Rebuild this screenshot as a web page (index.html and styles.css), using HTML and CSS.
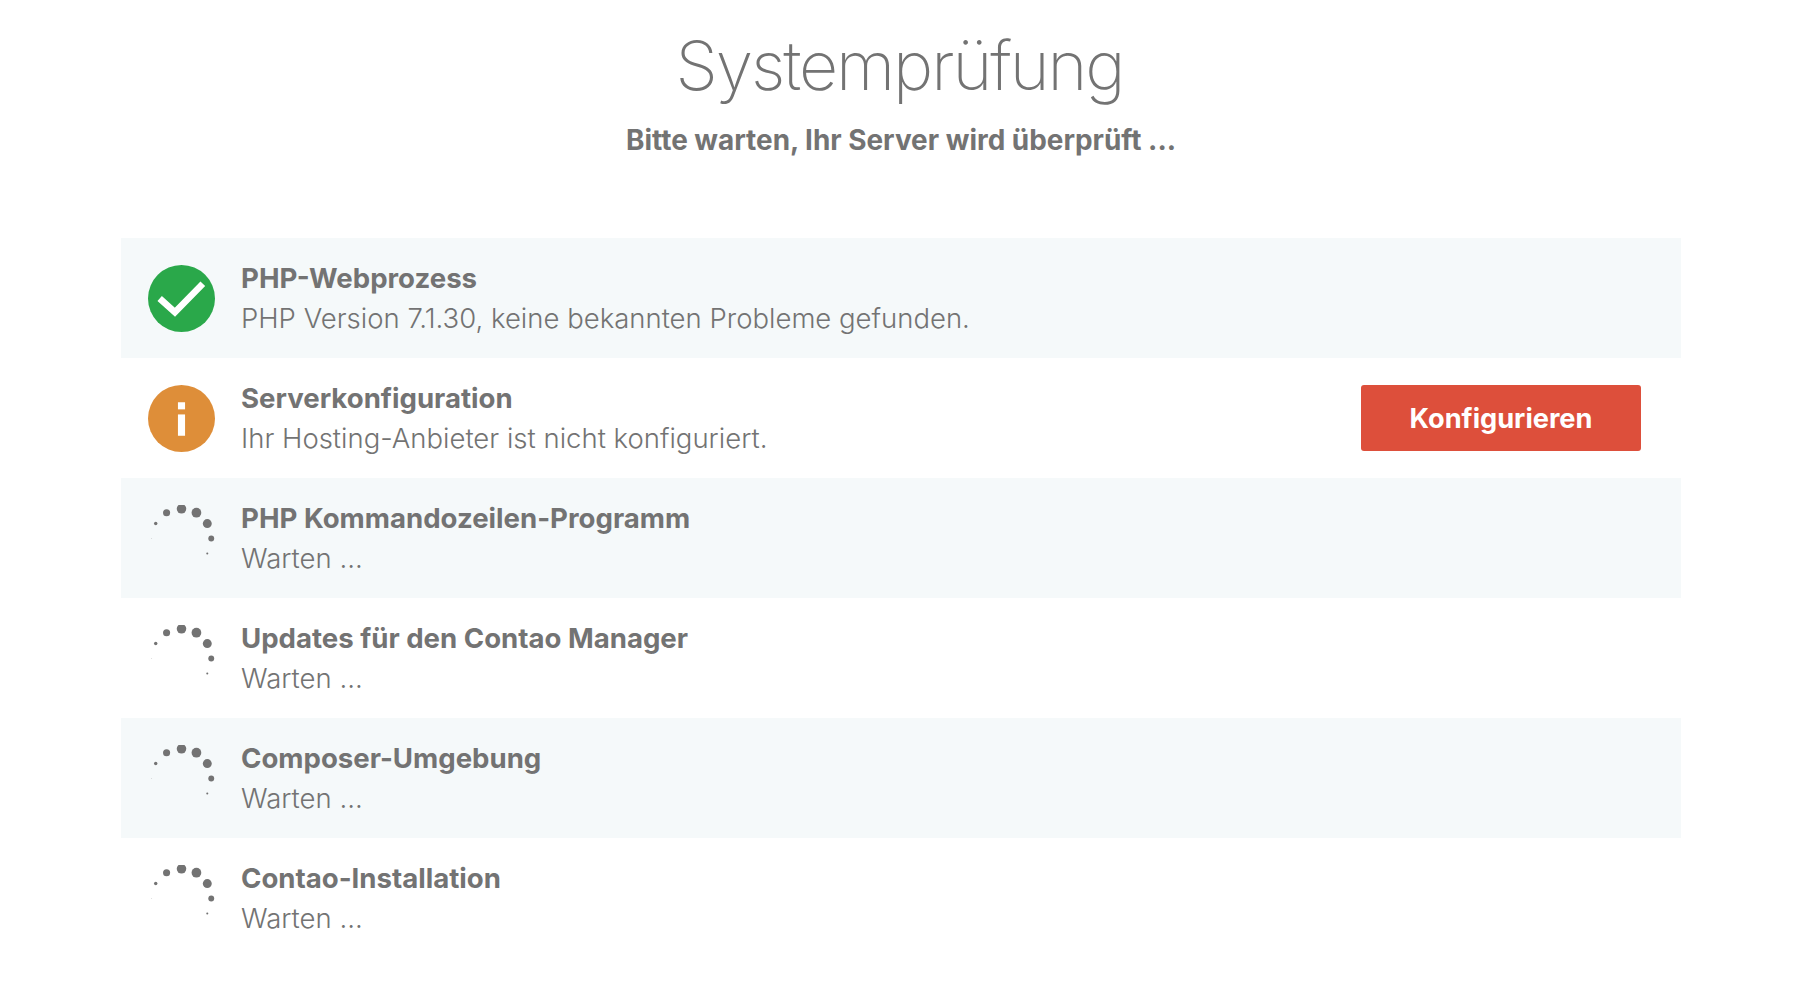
FILE: index.html
```html
<html>
	<head>
		<meta charset="utf-8">
		<title>Systemprüfung</title>
		<link rel="stylesheet" href="styles.css">
	</head>
	<body>
		<div class="check-container">
			<div class="check-header">
				<h1 class="check-title">Systemprüfung</h1>
				<p class="check-subtitle">Bitte warten, Ihr Server wird überprüft ...</p>
			</div>
			<div class="check-list">
				<div class="check-row">
					<svg class="check-icon" viewBox="0 0 66 66"><circle cx="33" cy="33" r="33" fill="#2aa84a"/><path d="M11.5 33 L26.500 46.500 L54 18.500" fill="none" stroke="#fff" stroke-width="6.500"/></svg>
					<div class="check-text">
						<div class="check-name">PHP-Webprozess</div>
						<div class="check-desc">PHP Version 7.1.30, keine bekannten Probleme gefunden.</div>
					</div>
				</div>
				<div class="check-row">
					<svg class="check-icon" viewBox="0 0 66 66"><circle cx="33" cy="33" r="33" fill="#de8e39"/><rect x="29.500" y="17" width="7" height="7" fill="#fff"/><rect x="29.500" y="29" width="7" height="21" fill="#fff"/></svg>
					<div class="check-text">
						<div class="check-name">Serverkonfiguration</div>
						<div class="check-desc">Ihr Hosting-Anbieter ist nicht konfiguriert.</div>
					</div>
					<button class="check-button">Konfigurieren</button>
				</div>
				<div class="check-row">
					<svg class="check-icon spinner" viewBox="0 0 66 66"><use href="#dots"/></svg>
					<div class="check-text">
						<div class="check-name">PHP Kommandozeilen-Programm</div>
						<div class="check-desc">Warten ...</div>
					</div>
				</div>
				<div class="check-row">
					<svg class="check-icon spinner" viewBox="0 0 66 66"><use href="#dots"/></svg>
					<div class="check-text">
						<div class="check-name">Updates für den Contao Manager</div>
						<div class="check-desc">Warten ...</div>
					</div>
				</div>
				<div class="check-row">
					<svg class="check-icon spinner" viewBox="0 0 66 66"><use href="#dots"/></svg>
					<div class="check-text">
						<div class="check-name">Composer-Umgebung</div>
						<div class="check-desc">Warten ...</div>
					</div>
				</div>
				<div class="check-row">
					<svg class="check-icon spinner" viewBox="0 0 66 66"><use href="#dots"/></svg>
					<div class="check-text">
						<div class="check-name">Contao-Installation</div>
						<div class="check-desc">Warten ...</div>
					</div>
				</div>
			</div>
		</div>
		<svg class="svg-defs" width="0" height="0">
			<g id="dots" fill="#737373">
				<circle cx="3.700" cy="33" r="0.300"/>
				<circle cx="7.600" cy="18.300" r="1.700"/>
				<circle cx="18.300" cy="7.600" r="3.500"/>
				<circle cx="33" cy="3.700" r="4.700"/>
				<circle cx="47.700" cy="7.600" r="4.800"/>
				<circle cx="58.400" cy="18.300" r="4.400"/>
				<circle cx="62.300" cy="33" r="2.900"/>
				<circle cx="58.400" cy="47.700" r="1"/>
			</g>
		</svg>
	</body>
</html>
```

FILE: styles.css
```css
html,body{
	padding:0;
	margin:0;
	background:#fff;
}
body{
	font-family:Inter,"Liberation Sans",sans-serif;
	color:#737373;
}
.check-container{
	width:1560px;
	margin:0 119px 0 121px;
}
.check-header{
	height:238px;
	padding-top:21px;
	box-sizing:border-box;
	text-align:center;
}
.check-title{
	margin:0;
	padding-right:3px;
	font-size:68px;
	line-height:88px;
	font-weight:200;
	letter-spacing:-2.100px;
}
.check-subtitle{
	margin:11px 0 0 0;
	font-size:27.900px;
	line-height:40px;
	font-weight:700;
}
.check-row{
	height:120px;
	padding:0 40px 0 27px;
	box-sizing:border-box;
	display:flex;
	align-items:center;
}
.check-row:nth-child(odd){
	background:#f5f9fa;
}
.check-icon{
	width:67px;
	height:67px;
	flex:none;
	margin-right:26px;
}
.check-text{
	flex:1;
}
.check-name{
	font-size:27.600px;
	line-height:40px;
	font-weight:700;
}
.check-desc{
	font-size:27.500px;
	line-height:40px;
	font-weight:300;
}
.check-button{
	width:280px;
	height:66px;
	border:none;
	border-radius:3px;
	background:#dd4f3b;
	color:#fff;
	font-family:inherit;
	font-size:27.200px;
	font-weight:700;
}
.svg-defs{
	position:absolute;
}
```
